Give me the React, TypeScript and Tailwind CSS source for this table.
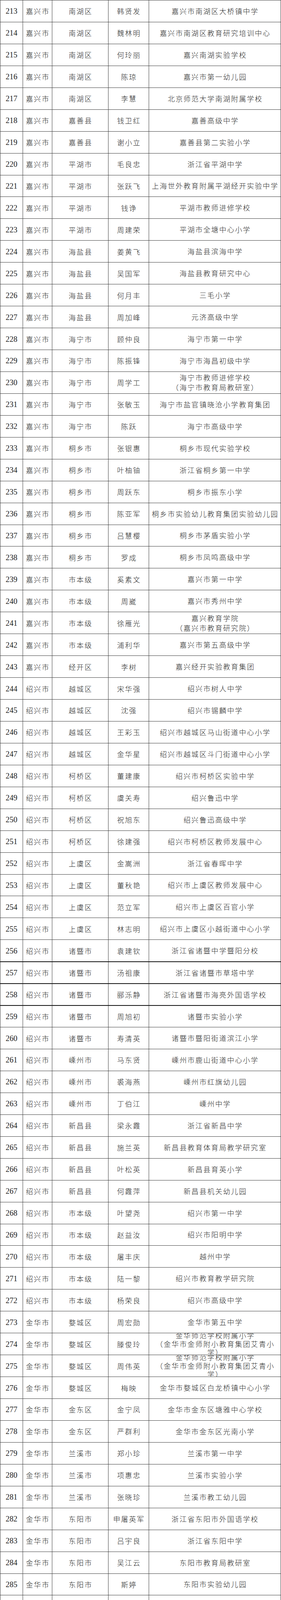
import clsx from "clsx";

// 序号|地市|区县|姓名|单位（"/" 表示单位内换行）
const data = `213|嘉兴市|南湖区|韩贤发|嘉兴市南湖区大桥镇中学
214|嘉兴市|南湖区|魏林明|嘉兴市南湖区教育研究培训中心
215|嘉兴市|南湖区|何玲丽|嘉兴南湖实验学校
216|嘉兴市|南湖区|陈琼|嘉兴市第一幼儿园
217|嘉兴市|南湖区|李慧|北京师范大学南湖附属学校
218|嘉兴市|嘉善县|钱卫红|嘉善高级中学
219|嘉兴市|嘉善县|谢小立|嘉善县第二实验小学
220|嘉兴市|平湖市|毛良忠|浙江省平湖中学
221|嘉兴市|平湖市|张跃飞|上海世外教育附属平湖经开实验中学
222|嘉兴市|平湖市|钱诤|平湖市教师进修学校
223|嘉兴市|平湖市|周建荣|平湖市全塘中心小学
224|嘉兴市|海盐县|姜黄飞|海盐县滨海中学
225|嘉兴市|海盐县|吴国军|海盐县教育研究中心
226|嘉兴市|海盐县|何月丰|三毛小学
227|嘉兴市|海盐县|周加峰|元济高级中学
228|嘉兴市|海宁市|顾仲良|海宁市第一中学
229|嘉兴市|海宁市|陈振锋|海宁市海昌初级中学
230|嘉兴市|海宁市|周学工|海宁市教师进修学校/（海宁市教育局教研室）
231|嘉兴市|海宁市|张敏玉|海宁市盐官镇晓沧小学教育集团
232|嘉兴市|海宁市|陈跃|海宁市高级中学
233|嘉兴市|桐乡市|张银惠|桐乡市现代实验学校
234|嘉兴市|桐乡市|叶柚铀|浙江省桐乡第一中学
235|嘉兴市|桐乡市|周跃东|桐乡市振东小学
236|嘉兴市|桐乡市|陈亚军|桐乡市实验幼儿教育集团实验幼儿园
237|嘉兴市|桐乡市|吕慧樱|桐乡市茅盾实验小学
238|嘉兴市|桐乡市|罗成|桐乡市凤鸣高级中学
239|嘉兴市|市本级|奚素文|嘉兴市第一中学
240|嘉兴市|市本级|周崴|嘉兴市秀州中学
241|嘉兴市|市本级|徐雁光|嘉兴教育学院/（嘉兴市教育研究院）
242|嘉兴市|市本级|浦利华|嘉兴市第五高级中学
243|嘉兴市|经开区|李树|嘉兴经开实验教育集团
244|绍兴市|越城区|宋华强|绍兴市树人中学
245|绍兴市|越城区|沈强|绍兴市锡麟中学
246|绍兴市|越城区|王彩玉|绍兴市越城区马山街道中心小学
247|绍兴市|越城区|金华星|绍兴市越城区斗门街道中心小学
248|绍兴市|柯桥区|董建康|绍兴市柯桥区实验中学
249|绍兴市|柯桥区|虞关寿|绍兴鲁迅中学
250|绍兴市|柯桥区|祝旭东|绍兴鲁迅高级中学
251|绍兴市|柯桥区|徐建强|绍兴市柯桥区教师发展中心
252|绍兴市|上虞区|金嵩洲|浙江省春晖中学
253|绍兴市|上虞区|董秋艳|绍兴市上虞区教师发展中心
254|绍兴市|上虞区|范立军|绍兴市上虞区百官小学
255|绍兴市|上虞区|林志明|绍兴市上虞区小越街道中心小学
256|绍兴市|诸暨市|袁建钦|浙江省诸暨中学暨阳分校
257|绍兴市|诸暨市|汤祖康|浙江省诸暨市草塔中学
258|绍兴市|诸暨市|郦泺静|浙江省诸暨市海亮外国语学校
259|绍兴市|诸暨市|周旭初|诸暨市实验小学
260|绍兴市|诸暨市|寿清英|诸暨市暨阳街道滨江小学
261|绍兴市|嵊州市|马东贤|嵊州市鹿山街道中心小学
262|绍兴市|嵊州市|裘海燕|嵊州市红旗幼儿园
263|绍兴市|嵊州市|丁伯江|嵊州中学
264|绍兴市|新昌县|梁永霞|浙江省新昌中学
265|绍兴市|新昌县|施兰英|新昌县教育体育局教学研究室
266|绍兴市|新昌县|叶松英|新昌县育英小学
267|绍兴市|新昌县|何霞萍|新昌县机关幼儿园
268|绍兴市|市本级|叶望尧|绍兴市第一中学
269|绍兴市|市本级|赵益汝|绍兴市阳明中学
270|绍兴市|市本级|屠丰庆|越州中学
271|绍兴市|市本级|陆一黎|绍兴市教育教学研究院
272|绍兴市|市本级|杨荣良|绍兴市高级中学
273|金华市|婺城区|周宏勋|金华市第五中学
274|金华市|婺城区|滕俊玲|金华师范学校附属小学/（金华市金师附小教育集团艾青小/学）
275|金华市|婺城区|周伟英|金华师范学校附属小学/（金华市金师附小教育集团艾青小/学）
276|金华市|婺城区|梅映|金华市婺城区白龙桥镇中心小学
277|金华市|金东区|金宁凤|金华市金东区塘雅中心学校
278|金华市|金东区|严群利|金华市金东区光南小学
279|金华市|兰溪市|郑小珍|兰溪市第一中学
280|金华市|兰溪市|项惠忠|兰溪市实验小学
281|金华市|兰溪市|张晓珍|兰溪市教工幼儿园
282|金华市|东阳市|申屠英军|浙江省东阳市外国语学校
283|金华市|东阳市|吕宇良|浙江省东阳中学
284|金华市|东阳市|吴江云|东阳市教育局教研室
285|金华市|东阳市|斯婷|东阳市实验幼儿园
286|金华市|义乌市|兰国祥|义乌市义亭镇铜溪学校
287|金华市|义乌市|杨文贵|义乌公学
288|金华市|义乌市|高爱敏|义乌市义亭中学
289|金华市|义乌市|骆小成|义乌市教育研修院/（义乌市智慧教育中心）
290|金华市|义乌市|郭勇|义乌市龙回实验小学
291|金华市|义乌市|杨凯明|义乌市实验小学
292|金华市|义乌市|叶艳|浙江省义乌中学
293|金华市|永康市|郑月琴|永康外国语学校
294|金华市|浦江县|楼优奇|浙江省浦江中学
295|金华市|浦江县|潘永中|浦江县第四中学
296|金华市|浦江县|姚荣金|浦江县教育研究与教师培训中心
297|金华市|浦江县|黄誉兰|浦江县实验小学
298|金华市|武义县|廖秀群|浙江省武义县实验中学
299|金华市|武义县|陶云仙|浙江省武义第一中学
300|金华市|武义县|王福良|武义县教育局教研室
301|金华市|磐安县|董兰芳|磐安县新城中学
302|金华市|市本级|张志良|金华市外国语实验学校
303|金华市|市本级|方家鸿|浙江金华第一中学
304|金华市|市本级|王红良|金华市外国语学校
305|金华市|市本级|吴望雁|金华市教育教学研究中心`;

const rows = data.split("\n").map((line) => {
  const [no, city, county, name, unit] = line.split("|");
  return { no, city, county, name, unit: unit.split("/") };
});

// 这几行上边框在原表里是粗线
const thickTop = ["257", "258", "259"];

function Cell({ children, className }: { children: React.ReactNode; className?: string }) {
  return (
    <div className={clsx("flex h-full min-h-0 items-center justify-center overflow-hidden border-r border-[#3c3c3c] text-center", className)}>
      {children}
    </div>
  );
}

function Zh({ children }: { children: React.ReactNode }) {
  return <span className="pl-[2px] tracking-[2.3px]">{children}</span>;
}

export default function App() {
  return (
    <div className="w-[720px] bg-white font-['Noto_Sans_CJK_SC',sans-serif] text-[18px] leading-[24px] font-light text-[#262626]">
      <div className="grid auto-rows-[55.95px] grid-cols-1">
        {rows.map((r, i) => (
          <div
            key={r.no}
            className={clsx(
              "grid h-full grid-cols-[59px_75px_144px_104px_338px] grid-rows-1 overflow-hidden",
              thickTop.includes(r.no) ? "border-t-2 border-[#111]" : "border-t border-[#3c3c3c]",
              i === rows.length - 1 && "border-b border-b-[#3c3c3c]"
            )}
          >
            <Cell className="border-l font-['Liberation_Serif',serif] text-[20px] font-normal text-[#222]">{r.no}</Cell>
            <Cell>
              <Zh>{r.city}</Zh>
            </Cell>
            <Cell>
              <Zh>{r.county}</Zh>
            </Cell>
            <Cell>
              <Zh>{r.name}</Zh>
            </Cell>
            <Cell>
              <div className={r.unit.length > 2 ? "leading-[21.5px]" : "leading-[25px]"}>
                {r.unit.map((u, k) => (
                  <div key={k} className="whitespace-nowrap">
                    <Zh>{u}</Zh>
                  </div>
                ))}
              </div>
            </Cell>
          </div>
        ))}
      </div>
    </div>
  );
}
